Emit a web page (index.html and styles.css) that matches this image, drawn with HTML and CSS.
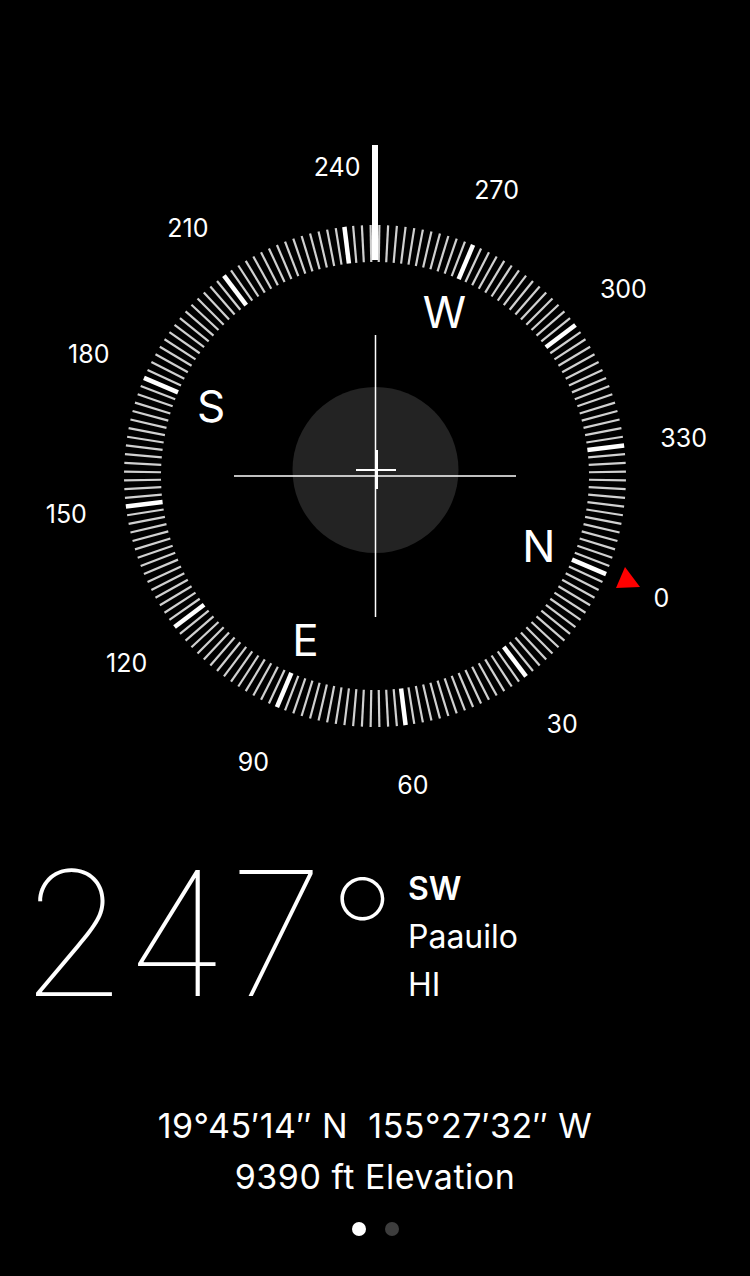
FILE: index.html
```html
<!DOCTYPE html>
<html lang="en">
<head>
  <meta charset="UTF-8">
  <title>Compass</title>
  <link rel="stylesheet" href="styles.css">
</head>
<body>

  <main class="compass-app">
    <div class="dial-wrap">
      <svg id="dial" class="dial" width="750" height="830" viewBox="0 0 750 830">
        <g id="ticks"></g>
        <g id="labels" class="labels"></g>
        <g id="cardinals" class="cardinals"></g>

        <!-- heading marker -->
        <line x1="375" y1="145" x2="375" y2="260" stroke="#fff" stroke-width="6" />
        <!-- north pointer -->
        <polygon points="616,588 640,587 625,567" fill="#ff0000" />

        <!-- level bubble + crosshair -->
        <circle cx="375.5" cy="470" r="83" fill="#232323" />
        <line x1="234" y1="476" x2="516" y2="476" stroke="#fff" stroke-width="1.5" />
        <line x1="375.5" y1="335" x2="375.5" y2="617" stroke="#fff" stroke-width="1.5" />
        <line x1="356" y1="470" x2="396" y2="470" stroke="#fff" stroke-width="2" />
        <line x1="376.5" y1="450" x2="376.5" y2="489" stroke="#fff" stroke-width="3" />
      </svg>
    </div>

    <section class="readout">
      <div class="heading">247<span class="deg">°</span></div>
      <div class="place">
        <div class="dir">SW</div>
        <div>Paauilo</div>
        <div>HI</div>
      </div>
    </section>

    <section class="coords">
      <p>19°45′14″ N&nbsp;&nbsp;155°27′32″ W</p>
      <p>9390 ft Elevation</p>
    </section>

    <div class="pager">
      <span class="dot active"></span>
      <span class="dot"></span>
    </div>
  </main>

  <script>
    const NS = 'http://www.w3.org/2000/svg';
    const cx = 375, cy = 476;
    const heading = 247;

    function polar(deg, r) {
      const a = (deg - heading) * Math.PI / 180;
      return [cx + r * Math.sin(a), cy - r * Math.cos(a)];
    }

    const ticks = document.getElementById('ticks');
    for (let d = 0; d < 360; d += 2) {
      const major = d % 30 === 0;
      const [x1, y1] = polar(d, 214);
      const [x2, y2] = polar(d, 251);
      const line = document.createElementNS(NS, 'line');
      line.setAttribute('x1', x1);
      line.setAttribute('y1', y1);
      line.setAttribute('x2', x2);
      line.setAttribute('y2', y2);
      line.setAttribute('stroke', major ? '#fff' : '#d0d0d0');
      line.setAttribute('stroke-width', major ? 4.5 : 2.2);
      ticks.appendChild(line);
    }

    function addText(group, txt, deg, r) {
      const [x, y] = polar(deg, r);
      const t = document.createElementNS(NS, 'text');
      t.setAttribute('x', x);
      t.setAttribute('y', y);
      t.textContent = txt;
      group.appendChild(t);
    }

    const labels = document.getElementById('labels');
    for (let d = 0; d < 360; d += 30) {
      addText(labels, String(d), d, 311);
    }

    const cardinals = document.getElementById('cardinals');
    [['N', 0], ['E', 90], ['S', 180], ['W', 270]].forEach(function (c) {
      addText(cardinals, c[0], c[1], 178);
    });
  </script>
</body>
</html>
```

FILE: styles.css
```css
body {
  margin: 0;
  padding: 0;
  background: #000;
  color: #fff;
  font-family: Inter, "Noto Sans", sans-serif;
}

.compass-app {
  width: 750px;
  height: 1276px;
  overflow: hidden;
  display: flex;
  flex-direction: column;
}

.dial {
  display: block;
}

.labels text {
  fill: #fff;
  font-size: 25px;
  text-anchor: middle;
  dominant-baseline: central;
}

.cardinals text {
  fill: #fff;
  font-size: 44px;
  text-anchor: middle;
  dominant-baseline: central;
}

.readout {
  display: flex;
  margin-top: 17px;
  padding-left: 20px;
}

.heading {
  font-size: 173px;
  font-weight: 100;
  line-height: 1;
  letter-spacing: 0.5px;
}

.heading .deg {
  font-size: 148px;
  vertical-align: 10px;
  margin-left: 5px;
  letter-spacing: 0;
}

.place {
  margin-top: 18px;
  margin-left: 12px;
  font-size: 32px;
  line-height: 48px;
}

.place .dir {
  font-weight: 600;
}

.coords {
  margin-top: 80px;
  text-align: center;
  font-size: 34px;
  line-height: 51px;
  letter-spacing: 0.5px;
}

.coords p {
  margin: 0;
}

.pager {
  display: flex;
  justify-content: center;
  gap: 19px;
  margin-top: 20px;
}

.dot {
  width: 14px;
  height: 14px;
  border-radius: 50%;
  background: #3d3d3d;
}

.dot.active {
  background: #fff;
}
```
